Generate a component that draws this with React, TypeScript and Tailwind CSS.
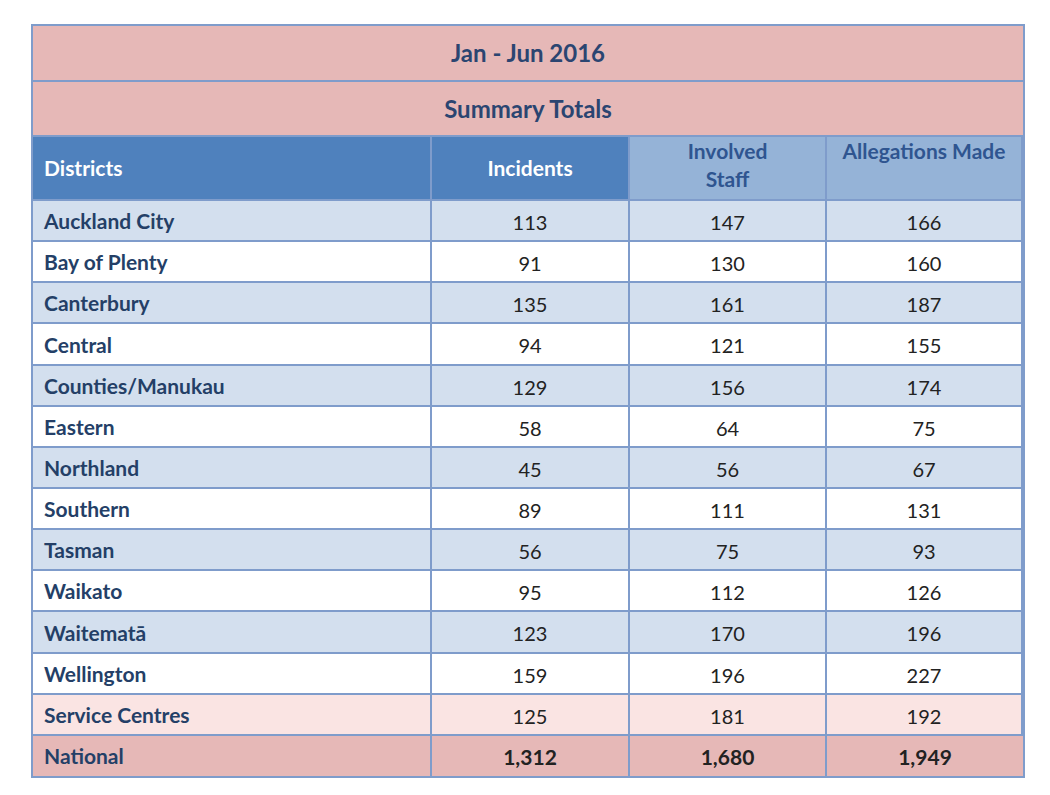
const rows: { name: string; v: [string, string, string]; h: number }[] = [
  { name: "Auckland City", v: ["113", "147", "166"], h: 41 },
  { name: "Bay of Plenty", v: ["91", "130", "160"], h: 41 },
  { name: "Canterbury", v: ["135", "161", "187"], h: 41 },
  { name: "Central", v: ["94", "121", "155"], h: 42 },
  { name: "Counties/Manukau", v: ["129", "156", "174"], h: 41 },
  { name: "Eastern", v: ["58", "64", "75"], h: 41 },
  { name: "Northland", v: ["45", "56", "67"], h: 41 },
  { name: "Southern", v: ["89", "111", "131"], h: 41 },
  { name: "Tasman", v: ["56", "75", "93"], h: 41 },
  { name: "Waikato", v: ["95", "112", "126"], h: 41 },
  { name: "Waitematā", v: ["123", "170", "196"], h: 42 },
  { name: "Wellington", v: ["159", "196", "227"], h: 41 },
];

const cols = "grid grid-cols-[399px_198px_197px_196px]";
const cell = "border-r-2 border-b-2 border-[#7f9ccb] flex items-center";

function DataRow({ name, v, h, bg }: { name: string; v: string[]; h: number; bg: string }) {
  return (
    <div className={`${cols} ${bg}`} style={{ height: h }}>
      <div className={`${cell} pl-[11px] pt-[1px] text-[21px] font-bold text-[#243f67]`}>{name}</div>
      {v.map((x, i) => (
        <div
          key={i}
          className={`${cell} justify-center pt-[2px] text-[20px] text-[#222] ${i === 2 ? "border-r-0" : ""}`}
        >
          {x}
        </div>
      ))}
    </div>
  );
}

export default function App() {
  return (
    <div className="min-h-[795px] w-[1050px] bg-white pl-[31px] pt-[24px] font-['Lato','Open_Sans',sans-serif]">
      <div className="w-[994px] border-2 border-[#7f9ccb]">
        <div className="flex h-[56px] items-center justify-center border-b-2 border-[#7f9ccb] bg-[#e6b8b7] text-[24px] font-bold text-[#2b4571]">
          Jan - Jun 2016
        </div>
        <div className="flex h-[55px] items-center justify-center border-b-2 border-[#7f9ccb] bg-[#e6b8b7] text-[24px] font-bold text-[#2b4571]">
          Summary Totals
        </div>
        <div className={`${cols} h-[64px]`}>
          <div className={`${cell} bg-[#4f81bd] pl-[11px] text-[21px] font-bold text-white`}>Districts</div>
          <div className={`${cell} justify-center bg-[#4f81bd] text-[21px] font-bold text-white`}>Incidents</div>
          <div className={`${cell} items-start justify-center bg-[#95b3d7] text-center text-[21px] font-bold leading-[28px] text-[#2f5590]`}>
            Involved
            <br />
            Staff
          </div>
          <div className={`${cell} items-start justify-center border-r-0 bg-[#95b3d7] text-[21px] font-bold leading-[28px] text-[#2f5590]`}>
            Allegations Made
          </div>
        </div>
        {rows.map((r, i) => (
          <DataRow key={r.name} name={r.name} v={r.v} h={r.h} bg={i % 2 === 0 ? "bg-[#d3dfee]" : "bg-white"} />
        ))}
        <DataRow name="Service Centres" v={["125", "181", "192"]} h={41} bg="bg-[#fae4e3]" />
        <div className={`${cols} h-[40px] bg-[#e6b8b7]`}>
          <div className="flex items-center border-r-2 border-[#7f9ccb] pl-[11px] text-[21px] font-bold text-[#243f67]">National</div>
          <div className="flex items-center justify-center border-r-2 border-[#7f9ccb] pt-[2px] text-[21px] font-bold text-[#222]">1,312</div>
          <div className="flex items-center justify-center border-r-2 border-[#7f9ccb] pt-[2px] text-[21px] font-bold text-[#222]">1,680</div>
          <div className="flex items-center justify-center pt-[2px] text-[21px] font-bold text-[#222]">1,949</div>
        </div>
      </div>
    </div>
  );
}
